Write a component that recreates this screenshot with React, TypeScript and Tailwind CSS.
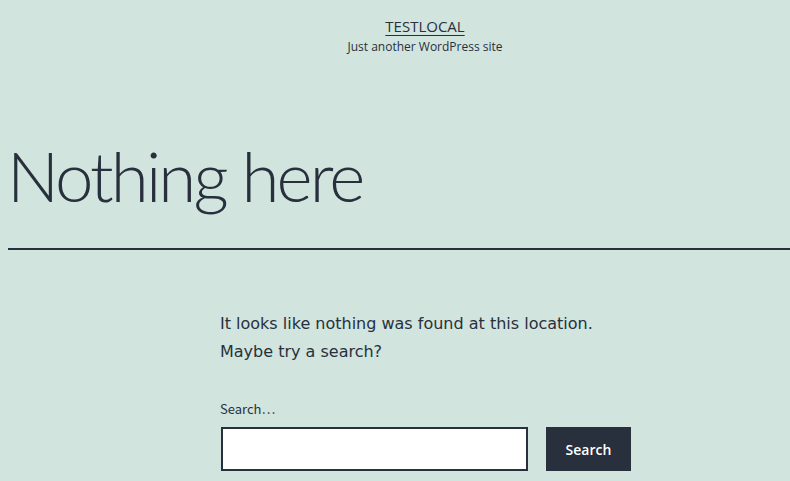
export default function App() {
  return (
    <div className="min-h-[481px] w-full bg-[#d1e4dd] text-[#28303d] overflow-hidden" style={{ fontFamily: '"Open Sans", sans-serif' }}>
      <header className="flex flex-col items-center pl-[60px] pt-[15px]">
        <a href="#" className="text-[15px] leading-[22px] underline underline-offset-[3px] decoration-1 text-[#28303d]">
          TESTLOCAL
        </a>
        <p className="text-[12px] leading-[18px] mt-[1px]">Just another WordPress site</p>
      </header>

      <div className="pl-[7px] pt-[75px]">
        <h1 className="text-[69px] leading-[90px] font-light tracking-[-2.9px]" style={{ fontFamily: 'Lato, sans-serif' }}>
          Nothing here
        </h1>
        <div className="ml-px mt-[27px] h-[2px] bg-[#28303d]" />
      </div>

      <main className="pl-[220px] pt-[60px]">
        <p className="text-[16px] leading-[28px]" style={{ fontFamily: '"DejaVu Sans", sans-serif' }}>
          It looks like nothing was found at this location.
          <br />
          Maybe try a search?
        </p>

        <form className="mt-[34px]" onSubmit={(e) => e.preventDefault()}>
          <label className="block text-[13px] leading-[18px] mb-[9px]" style={{ fontFamily: '"Noto Sans CJK JP", sans-serif' }}>
            Search…
          </label>
          <div className="flex gap-[18px]">
            <input type="search" className="w-[307px] h-[44px] bg-white border-2 border-[#28303d] ml-[1px]" />
            <button type="submit" className="w-[85px] h-[44px] bg-[#28303d] text-white text-[14px] font-semibold">
              Search
            </button>
          </div>
        </form>
      </main>
    </div>
  );
}
